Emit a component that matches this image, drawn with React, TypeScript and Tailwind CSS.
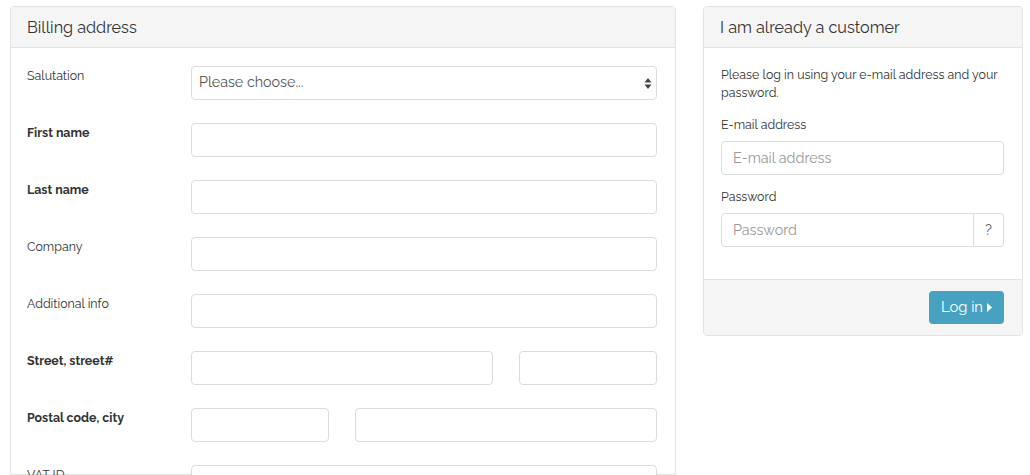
import React from "react";

const font = { fontFamily: "Raleway, Lato, 'Open Sans', sans-serif" };

function Input({ className = "", placeholder = "" }: { className?: string; placeholder?: string }) {
  return (
    <input
      placeholder={placeholder}
      className={`h-[34px] min-w-0 rounded-[4px] border border-[#dcdcdc] bg-white px-[11px] text-[14.3px] text-[#555] placeholder:text-[#999] outline-none ${className}`}
    />
  );
}

function Row({ label, bold, children }: { label: string; bold?: boolean; children: React.ReactNode }) {
  return (
    <div className="flex items-start">
      <div className={`w-[164px] shrink-0 pt-[1px] text-[12.4px] text-[#333] ${bold ? "font-bold" : ""}`}>{label}</div>
      <div className="flex min-w-0 flex-1">{children}</div>
    </div>
  );
}

export default function App() {
  return (
    <div className="flex h-[475px] w-[1030px] gap-[27px] overflow-hidden bg-white pl-[10px] pt-[6px]" style={font}>
      <div className="w-[666px] shrink-0 rounded-t-[4px] border border-[#e3e3e3]">
        <div className="flex h-[41px] items-center border-b border-[#e3e3e3] bg-[#f5f5f5] px-4 pt-[2px] text-[16.2px] text-[#333]">
          Billing address
        </div>
        <div className="flex flex-col gap-[23px] pl-4 pr-[18px] pt-[18px]">
          <Row label="Salutation">
            <div className="relative flex h-[34px] flex-1 items-center rounded-[4px] border border-[#dcdcdc] bg-white px-[7px] text-[14.3px] text-[#555]">
              Please choose...
              <svg className="absolute right-[4px] top-[10px]" width="8" height="13" viewBox="0 0 8 13">
                <path d="M4 1 L7.5 5.5 H0.5 Z" fill="#444" />
                <path d="M4 12 L7.5 7.5 H0.5 Z" fill="#444" />
              </svg>
            </div>
          </Row>
          <Row label="First name" bold>
            <Input className="w-0 flex-1" />
          </Row>
          <Row label="Last name" bold>
            <Input className="w-0 flex-1" />
          </Row>
          <Row label="Company">
            <Input className="w-0 flex-1" />
          </Row>
          <Row label="Additional info">
            <Input className="w-0 flex-1" />
          </Row>
          <Row label="Street, street#" bold>
            <div className="flex flex-1 gap-[26px]">
              <Input className="w-[302px]" />
              <Input className="w-0 flex-1" />
            </div>
          </Row>
          <Row label="Postal code, city" bold>
            <div className="flex flex-1 gap-[26px]">
              <Input className="w-[138px]" />
              <Input className="w-0 flex-1" />
            </div>
          </Row>
          <Row label="VAT ID">
            <Input className="w-0 flex-1" />
          </Row>
        </div>
      </div>

      <div className="h-[330px] w-[320px] shrink-0 overflow-hidden rounded-[4px] border border-[#e3e3e3]">
        <div className="flex h-[41px] items-center border-b border-[#e3e3e3] bg-[#f5f5f5] px-[16px] pt-[2px] text-[16.2px] text-[#333]">
          I am already a customer
        </div>
        <div className="h-[231px] pl-[17px] pr-[18px] pt-[18px] text-[12.4px] leading-[18px] text-[#333]">
          <p>Please log in using your e-mail address and your password.</p>
          <div className="mt-[14px]">E-mail address</div>
          <Input className="mt-[7px] w-full" placeholder="E-mail address" />
          <div className="mt-[13px]">Password</div>
          <div className="mt-[7px] flex h-[34px] w-full">
            <input
              placeholder="Password"
              className="h-[34px] w-0 min-w-0 flex-1 rounded-l-[4px] border border-[#dcdcdc] bg-white px-[11px] text-[14.3px] text-[#555] placeholder:text-[#999] outline-none"
            />
            <div className="flex h-[34px] w-[30px] items-center justify-center rounded-r-[4px] border border-l-0 border-[#dcdcdc] text-[14.5px] text-[#555]">
              ?
            </div>
          </div>
        </div>
        <div className="flex h-[56px] items-start justify-end border-t border-[#e3e3e3] bg-[#f5f5f5] pl-[17px] pr-[18px] pt-[11px]">
          <button className="flex h-[33px] items-center gap-[4px] rounded-[4px] bg-[#47a2c2] px-[12px] text-[14.8px] text-white">
            Log in
            <svg width="5" height="9" viewBox="0 0 5 9">
              <path d="M0 0 L5 4.5 L0 9 Z" fill="white" />
            </svg>
          </button>
        </div>
      </div>
    </div>
  );
}
